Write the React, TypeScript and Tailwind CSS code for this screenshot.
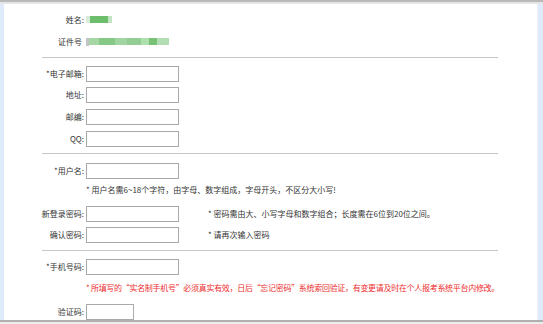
import React from 'react';

const Row: React.FC<{ label: React.ReactNode; className?: string; children?: React.ReactNode }> = ({ label, className = 'h-[22px]', children }) => (
  <div className={`flex items-center ${className}`}>
    <div className="w-[82px] shrink-0 text-right pr-[2px] whitespace-nowrap">{label}</div>
    {children}
  </div>
);

const Field: React.FC<{ w?: string }> = ({ w = 'w-[93px]' }) => (
  <input type="text" className={`${w} h-[16px] border border-[#a9a9a9] bg-white outline-none`} />
);

const Divider: React.FC<{ className?: string }> = ({ className = '' }) => (
  <div className={`ml-[38px] w-[456px] h-px bg-[#c6c6c6] ${className}`} />
);

const App: React.FC = () => {
  return (
    <div className="w-[543px] h-[324px] overflow-hidden bg-white flex flex-col font-['Noto_Sans_CJK_SC','Liberation_Sans',sans-serif] text-[8px] leading-[10px] text-[#333]">
      {/* top frame */}
      <div className="h-[2px] bg-[#b9b9b9] shrink-0" />
      <div className="h-[2px] bg-[#e6e6e6] shrink-0" />

      <div className="flex flex-1 min-h-0">
        <div className="w-[4px] bg-[#dfeafb] shrink-0" />

        <div className="flex-1 flex flex-col overflow-hidden">
          <div className="h-[5px] shrink-0" />
          <Row label="姓名:">
            <div className="flex items-center">
              <div className="w-[4px] h-[7px] bg-[#d8ecd8] blur-[0.6px]" />
              <div className="w-[18px] h-[7px] bg-[#6cbd6c] blur-[0.6px]" />
              <div className="w-[4px] h-[7px] bg-[#c4e4c4] blur-[0.6px]" />
            </div>
          </Row>
          <Row label={<span>证件号<span className="inline-block w-[2px]" /></span>}>
            <div className="flex items-center">
              <div className="w-[3px] h-[8px] bg-[#c4c4c4] blur-[0.5px]" />
              <div className="w-[10px] h-[7px] bg-[#a5d7a5] blur-[0.6px]" />
              <div className="w-[16px] h-[7px] bg-[#86c886] blur-[0.6px]" />
              <div className="w-[12px] h-[7px] bg-[#a0d4a0] blur-[0.6px]" />
              <div className="w-[14px] h-[7px] bg-[#93cd93] blur-[0.6px]" />
              <div className="w-[8px] h-[7px] bg-[#ade0ad] blur-[0.6px]" />
              <div className="w-[8px] h-[7px] bg-[#78c278] blur-[0.6px]" />
              <div className="w-[12px] h-[7px] bg-[#b3ddb3] blur-[0.6px]" />
            </div>
          </Row>

          <Divider className="mt-[4px] mb-[5px]" />
          <Row label="*电子邮箱:"><Field /></Row>
          <Row label="地址:"><Field /></Row>
          <Row label="邮编:"><Field /></Row>
          <Row label="QQ:"><Field /></Row>

          <Divider className="mt-[3px] mb-[6px]" />
          <Row label="*用户名:"><Field /></Row>
          <Row label="" className="h-[17px]">
            <span className="whitespace-nowrap">* 用户名需6~18个字符，由字母、数字组成，字母开头，不区分大小写!</span>
          </Row>
          <div className="h-[4px] shrink-0" />
          <Row label="新登录密码:">
            <Field />
            <span className="ml-[29px] whitespace-nowrap">* 密码需由大、小写字母和数字组合；长度需在6位到20位之间。</span>
          </Row>
          <Row label="确认密码:">
            <Field />
            <span className="ml-[29px] whitespace-nowrap">* 请再次输入密码</span>
          </Row>

          <Divider className="mt-[4px] mb-[5px]" />
          <Row label="*手机号码:"><Field /></Row>
          <Row label="" className="h-[20px]">
            <span className="whitespace-nowrap tracking-[-0.3px] text-[#ee2d2d]">* 所填写的“实名制手机号”必须真实有效，日后“忘记密码”系统索回验证，有变更请及时在个人报考系统平台内修改。</span>
          </Row>
          <Row label="验证码:" className="h-[22px] pt-[6px]">
            <Field w="w-[48px]" />
          </Row>
        </div>

        <div className="w-[6px] bg-[#dfeafb] border-l border-[#eef3fa] shrink-0" />
      </div>

      {/* bottom frame */}
      <div className="h-[2px] bg-[#b0b0b0] shrink-0" />
      <div className="h-[2px] bg-[#ececec] shrink-0" />
    </div>
  );
};

export default App;
